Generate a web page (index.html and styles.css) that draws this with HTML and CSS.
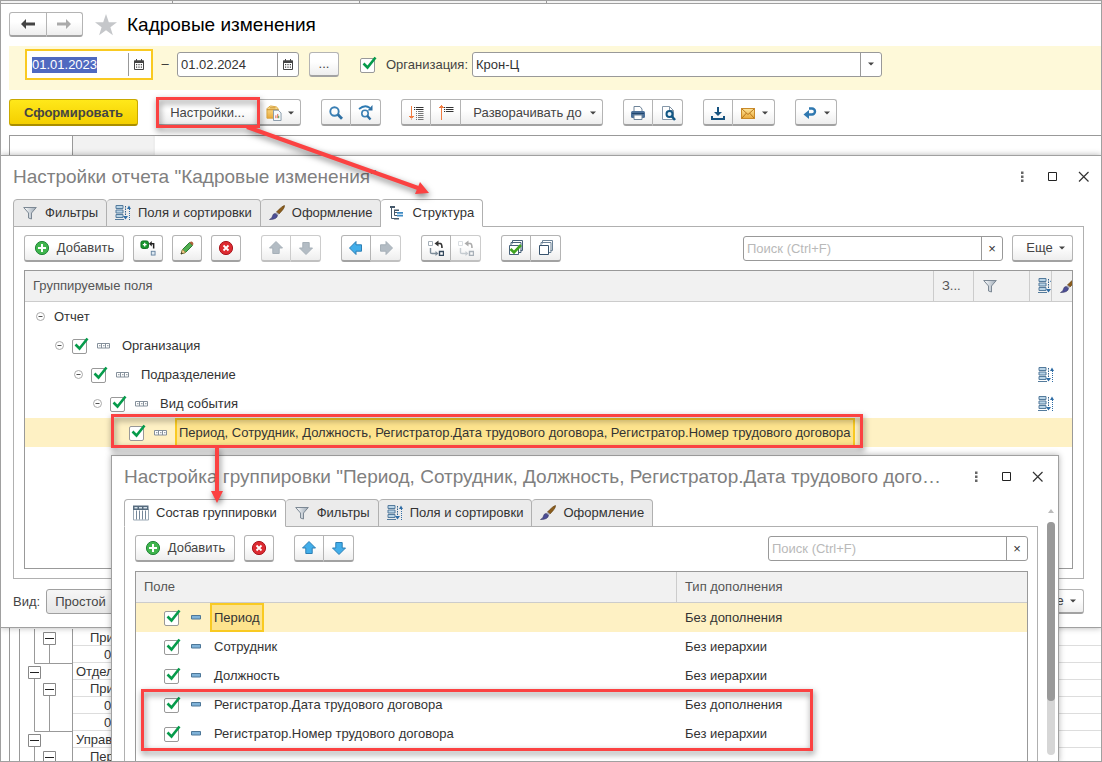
FILE: index.html
```html
<!DOCTYPE html>
<html lang="ru">
<head>
<meta charset="utf-8">
<title>Кадровые изменения</title>
<link rel="stylesheet" href="styles.css">
</head>
<body>
<svg class="sprite" aria-hidden="true">
  <defs>
    <linearGradient id="gFunnel" x1="0" x2="1"><stop offset="0" stop-color="#fff"/><stop offset="1" stop-color="#9aa7b4"/></linearGradient>
    <linearGradient id="gGold" x1="0" y1="0" x2="0" y2="1"><stop offset="0" stop-color="#fde49a"/><stop offset="1" stop-color="#e9a93a"/></linearGradient>
  </defs>
  <symbol id="left" viewBox="0 0 16 16"><path d="M1 8l5-5v3.600h9v2.800H6V13z" fill="currentColor"/></symbol>
  <symbol id="right" viewBox="0 0 16 16"><path d="M15 8l-5-5v3.600H1v2.800h9V13z" fill="currentColor"/></symbol>
  <symbol id="star" viewBox="0 0 24 24"><path d="M12 1l2.800 8.200H23l-6.600 5 2.500 8L12 17.300 5.100 22.200l2.500-8L1 9.200h8.200z" fill="#c5c7ca"/></symbol>
  <symbol id="cal" viewBox="0 0 10 11"><path d="M.5 2h9v8.500h-9z" fill="#fff" stroke="#444"/><path d="M0 1.500h10V4H0zM2 0h1v2H2zM7 0h1v2H7z" fill="#444"/><path d="M2 5h1.200v1.200H2zm2.400 0h1.200v1.200H4.400zm2.400 0H8v1.200H6.800zM2 7.500h1.200v1.200H2zm2.400 0h1.200v1.200H4.400zm2.400 0H8v1.200H6.800z" fill="#444"/></symbol>
  <symbol id="caret" viewBox="0 0 6 4"><path d="M0 .5h6L3 3.500z" fill="#444"/></symbol>
  <symbol id="folder" viewBox="0 0 17 17"><path d="M1 4l2-2 2-1 6 1 2 2v10H1z" fill="url(#gGold)" stroke="#d9a23c"/><path d="M1 5h12M4 3h6" stroke="#c98f2c" fill="none"/><path d="M8 5.500h5l3 3v8H8z" fill="#f7fafc" stroke="#8597a8"/><path d="M10.500 14v-3M12.500 14V9.500" stroke="#e05a3a"/><path d="M13.500 14v-2.500" stroke="#3aa04a"/></symbol>
  <symbol id="lens" viewBox="0 0 16 16"><circle cx="6.500" cy="6.500" r="4.200" fill="none" stroke="#3a7fb4" stroke-width="1.900"/><path d="M9.800 9.500l4.200 4.200" stroke="#2d6fa3" stroke-width="2.800"/></symbol>
  <symbol id="lensNext" viewBox="0 0 16 16"><path d="M1 4Q7-1 12 3" fill="none" stroke="#2d7ab3" stroke-width="1.800"/><path d="M14.500 0v5.500H9.500z" fill="#2d6fa3"/><circle cx="7" cy="8.500" r="3.200" fill="none" stroke="#3a7fb4" stroke-width="1.600"/><path d="M9.200 10.700l3.300 3.800" stroke="#2d6fa3" stroke-width="2.400"/></symbol>
  <symbol id="expand" viewBox="0 0 16 16"><path d="M3.500 1v12M1 11.500h5M2 12.500h3M3 14h1" stroke="#f07c42" fill="none"/><path d="M6 2.500h1.200M8 2.500h7.500M6 4.500h1.200M8 4.500h7.500" stroke="#333"/><path d="M8 6.500h1M10 6.500h5.500M8 8.500h1M10 8.500h5.500M8 10.500h1M10 10.500h5.500M8 12.500h1M10 12.500h5.500M8 14.500h1M10 14.500h5.500" stroke="#777"/></symbol>
  <symbol id="collapse" viewBox="0 0 16 16"><path d="M3.500 2v13M3 .5h1M2 1.500h3M1 2.500h5" stroke="#f07c42" fill="none"/><path d="M6 2.500h1.200M8 2.500h7.500M6 4.500h1.200M8 4.500h7.500M6 6.500h1.200M8 6.500h7.500" stroke="#333"/></symbol>
  <symbol id="printer" viewBox="0 0 16 16"><path d="M4 6V1.500h6L12 4v3" fill="#fff" stroke="#6f8499"/><rect x="1" y="6" width="14" height="7" rx="1.500" fill="#4b7099"/><path d="M2 8.500h12" stroke="#20466e"/><path d="M4 10h8v4.500H4z" fill="#fff" stroke="#6f8499"/></symbol>
  <symbol id="preview" viewBox="0 0 16 16"><path d="M2.500 1.500h7l4 4v9h-11z" fill="#fff" stroke="#8597a8"/><path d="M9.500 1.500v4h4" fill="none" stroke="#8597a8"/><circle cx="9.500" cy="9" r="3" fill="#e7f2fa" stroke="#125784" stroke-width="2"/><path d="M11.500 11l3.500 4" stroke="#125784" stroke-width="2.600"/></symbol>
  <symbol id="save" viewBox="0 0 16 16"><path d="M7 2h2v5h3l-4 4-4-4h3zM1 11h2v2h10v-2h2v4H1z" fill="#16527f"/></symbol>
  <symbol id="mail" viewBox="0 0 16 16"><rect x="1.500" y="3.500" width="13" height="10" fill="url(#gGold)" stroke="#c98a2a"/><path d="M2 4l6 5.500L14 4M2 13l4.500-5M14 13L9.500 8" fill="none" stroke="#b9771d"/></symbol>
  <symbol id="back" viewBox="0 0 16 16"><path d="M6 9.500H10a3 3 0 0 0 0-6H7" fill="none" stroke="#2f78b0" stroke-width="2.400"/><path d="M1.500 9.500L7 5v9z" fill="#2f78b0"/></symbol>
  <symbol id="funnel" viewBox="0 0 16 16"><path d="M1.700 2.500h12.600L9.500 8v6l-3-1V8z" fill="url(#gFunnel)" stroke="#7c8894"/></symbol>
  <symbol id="fields" viewBox="0 0 16 16"><path d="M1 .5h7v3H1zM1 5h7v3H1zM1 9.500h7v3H1z" fill="#b8d3e6" stroke="#547b9c"/><path d="M0 14.500h9" stroke="#547b9c"/><path d="M10.500 1v12" stroke="#2e5f8a" stroke-dasharray="1.500 1"/><path d="M8 11h5l-2.500 3.500zM12 4h4l-2-3.500z" fill="#2e6ca5"/><path d="M14.500 4v11" stroke="#2e6ca5" stroke-dasharray="1 1"/></symbol>
  <symbol id="brush" viewBox="0 0 16 16"><path d="M15.500.5Q16 3 10 9L7.500 7Q13 1 15.500.5z" fill="#8b5d1c" stroke="#5e3d0e" stroke-width=".6"/><path d="M7.500 7L10 9l-1.500 1.500-2.700-2z" fill="#aab"/><path d="M6 8.500l2.500 2Q8 14.500.5 14.500 3.500 13 3.500 11q.5-2.500 2.500-2.500z" fill="#4c4d96" stroke="#303260" stroke-width=".6"/></symbol>
  <symbol id="tree" viewBox="0 0 16 16"><path d="M1 1h5v2H1zM5 4.500h5v1.500H5zM5 13h5v1.500H5z" fill="#46586a"/><path d="M2.500 3v10.500H5M5.500 6v4.500H8M5.500 7.500h2.500" fill="none" stroke="#46586a"/><path d="M8 7h6v1.700H8zM8 9.800h6v1.700H8z" fill="#3e8ac4"/></symbol>
  <symbol id="cols" viewBox="0 0 16 15"><path d="M.5 4h15v10.500H.5z" fill="#fff" stroke="#9aa8b4"/><path d="M0 0h15.500v4.500H0z" fill="#566b7e"/><path d="M1.500 1.500h3v1.500h-3zM6 1.500h3v1.500H6zM10.500 1.500h3.500v1.500h-3.500z" fill="#d5e1ea"/><path d="M3.500 5v9M6.500 5v9M9.500 5v9M12.500 5v9" stroke="#75889a"/></symbol>
  <symbol id="plus" viewBox="0 0 16 16"><circle cx="8" cy="8" r="6.600" fill="#3fb54d" stroke="#24853a"/><path d="M8 4v8M4 8h8" stroke="#fff" stroke-width="2"/></symbol>
  <symbol id="cross" viewBox="0 0 16 16"><circle cx="8" cy="8" r="6.600" fill="#dd2b31" stroke="#a81820"/><path d="M5.500 5.500l5 5M10.500 5.500l-5 5" stroke="#fff" stroke-width="1.800"/></symbol>
  <symbol id="addNode" viewBox="0 0 17 17"><rect x="1" y="1" width="8" height="8" rx="2" fill="#18962f" stroke="#0c6e1f"/><path d="M5 3v4M3 5h4" stroke="#fff" stroke-width="1.400"/><path d="M11 4h3.500v5" fill="none" stroke="#222" stroke-width="1.600"/><path d="M9.500 4l3-3v6z" fill="#222"/><rect x="12" y="12" width="4" height="4" fill="#dce8f2" stroke="#6784a0"/></symbol>
  <symbol id="pencil" viewBox="0 0 16 16"><path d="M2 14l1.500-4.500 7-7 3 3-7 7z" fill="#51ae50" stroke="#2c7a35"/><path d="M2 14l1.500-4.500 3 3z" fill="#f6cf8e" stroke="#a8793c" stroke-width=".7"/><path d="M10.500 2.500l1.500-1q2-.5 2.500 2.500l-1 1.500z" fill="#b0613c"/><path d="M2 14l.6-2 1.400 1.400z" fill="#222"/></symbol>
  <symbol id="up" viewBox="0 0 16 16"><path d="M8 1.500l6.500 6.500h-3.300v5.500H4.800V8H1.500z" fill="var(--af)" stroke="var(--as)"/></symbol>
  <symbol id="down" viewBox="0 0 16 16"><path d="M8 14.500L1.500 8h3.300V2.500h6.400V8h3.300z" fill="var(--af)" stroke="var(--as)"/></symbol>
  <symbol id="aleft" viewBox="0 0 16 16"><path d="M1.500 8L8 1.500v3.300h5.500v6.400H8v3.300z" fill="var(--af)" stroke="var(--as)"/></symbol>
  <symbol id="aright" viewBox="0 0 16 16"><path d="M14.500 8L8 1.500v3.300H2.500v6.400H8v3.300z" fill="var(--af)" stroke="var(--as)"/></symbol>
  <symbol id="swap" viewBox="0 0 16 16"><path d="M.5 1.500h4v4h-4z" fill="#fff" stroke="#a5afb8"/><path d="M11.500 11.500h4v4h-4z" fill="#fff" stroke="#34485c" stroke-width="1.400"/><path d="M9 3.500h3.500Q14 4 14 8" fill="none" stroke="#333" stroke-width="1.600"/><path d="M6.500 3.500l4-3v6z" fill="#333"/><path d="M2.500 8v4.500q0 1 1.500 1h4" fill="none" stroke="#7d8c99" stroke-width="1.400"/><path d="M10.500 13.500l-3-2.500v5z" fill="#7d8c99"/></symbol>
  <symbol id="checkAll" viewBox="0 0 16 16"><path d="M4.500 3.500v-3h10v10h-2M3 5.500V2.500h10v10h-2" fill="none" stroke="#47617a"/><path d="M1.500 5.500h9v9h-9z" fill="#fff" stroke="#47617a"/><path d="M2.500 9l3.500 3.500L13 5" fill="none" stroke="#3fa31f" stroke-width="2.600"/></symbol>
  <symbol id="clearAll" viewBox="0 0 16 16"><path d="M4.500 3.500v-3h10v10h-2M3 5.500V2.500h10v10h-2" fill="none" stroke="#6d8397"/><path d="M1.500 5.500h9v9h-9z" fill="#fff" stroke="#38536d"/></symbol>
  <symbol id="minus" viewBox="0 0 9 9"><circle cx="4.500" cy="4.500" r="4" fill="#fff" stroke="#aaa"/><path d="M2.500 4.500h4" stroke="#555"/></symbol>
  <symbol id="group" viewBox="0 0 13 6"><path d="M.5.5h12v4.500H.5zM4.500.5v4.500M8.500.5v4.500" fill="#fff" stroke="#85909b"/><path d="M2 2.700h1.500M6 2.700h1.500M10 2.700h1.500" stroke="#85909b"/></symbol>
  <symbol id="field" viewBox="0 0 13 6"><path d="M2.500 .5h9v3.500h-9z" fill="#7fb2d8" stroke="#4d7798"/></symbol>
  <symbol id="dots" viewBox="0 0 12 12"><path d="M5 .5h2.500v2.500H5zm0 4h2.500v2.500H5zm0 4h2.500v2.500H5z" fill="#666"/></symbol>
  <symbol id="max" viewBox="0 0 12 12"><path d="M1.500 1.500h8v8h-8z" fill="none" stroke="#222"/></symbol>
  <symbol id="close" viewBox="0 0 12 12"><path d="M1 1l9.500 9.500M10.500 1L1 10.500" stroke="#333" stroke-width="1.200"/></symbol>
</svg>

<div class="desktop">
  <div class="strip"><i></i><i></i><i></i></div>
  <header class="page-head">
    <div class="group nav">
      <button class="btn" aria-label="Назад"><svg class="ic"><use href="#left"/></svg></button>
      <button class="btn dim" aria-label="Вперед"><svg class="ic"><use href="#right"/></svg></button>
    </div>
    <svg class="star"><use href="#star"/></svg>
    <h1>Кадровые изменения</h1>
  </header>

  <section class="filter">
    <div class="focus">
      <div class="field date"><input id="from" type="text" value="01.01.2023" aria-label="Начало периода"><button aria-label="Календарь"><svg class="cal"><use href="#cal"/></svg></button></div>
    </div>
    <span class="dash">–</span>
    <div class="field date"><input type="text" value="01.02.2024" aria-label="Конец периода"><button aria-label="Календарь"><svg class="cal"><use href="#cal"/></svg></button></div>
    <button class="btn icon pick">...</button>
    <input class="check" type="checkbox" id="org-on" checked>
    <label class="org" for="org-on">Организация:</label>
    <div class="field combo"><input type="text" value="Крон-Ц" aria-label="Организация"><button aria-label="Выбрать"><svg class="caret"><use href="#caret"/></svg></button></div>
  </section>

  <div class="main-tools">
    <button class="btn primary">Сформировать</button>
    <div class="tools">
      <div class="group">
        <button class="btn settings">Настройки...</button>
        <button class="btn drop" aria-label="Варианты"><svg class="ic"><use href="#folder"/></svg><svg class="caret"><use href="#caret"/></svg></button>
      </div>
      <div class="group">
        <button class="btn icon" aria-label="Найти"><svg class="ic"><use href="#lens"/></svg></button>
        <button class="btn icon" aria-label="Найти далее"><svg class="ic"><use href="#lensNext"/></svg></button>
      </div>
      <div class="group">
        <button class="btn icon" aria-label="Развернуть"><svg class="ic"><use href="#expand"/></svg></button>
        <button class="btn icon" aria-label="Свернуть"><svg class="ic"><use href="#collapse"/></svg></button>
        <button class="btn level">Разворачивать до<svg class="caret"><use href="#caret"/></svg></button>
      </div>
      <div class="group">
        <button class="btn icon" aria-label="Печать"><svg class="ic"><use href="#printer"/></svg></button>
        <button class="btn icon" aria-label="Просмотр"><svg class="ic"><use href="#preview"/></svg></button>
      </div>
      <div class="group">
        <button class="btn icon" aria-label="Сохранить"><svg class="ic"><use href="#save"/></svg></button>
        <button class="btn drop" aria-label="Отправить"><svg class="ic"><use href="#mail"/></svg><svg class="caret"><use href="#caret"/></svg></button>
      </div>
      <button class="btn drop" aria-label="Вернуться"><svg class="ic"><use href="#back"/></svg><svg class="caret"><use href="#caret"/></svg></button>
    </div>
  </div>

  <div class="report">
    <div class="report-top"><span></span><span></span></div>
    <div class="report-bottom">
      <svg class="outline" viewBox="0 0 63 132"><g fill="none" stroke="#999"><path d="M9.500 0v132M24.500 0v34.500H63M39.500 16v18M24.500 50v52.500H63M39.500 67v35M24.500 118v14M62.500 0v132"/><g fill="#fff" stroke="#888"><path d="M33.500 3.500h12v12h-12zM18.500 37.500h12v12h-12zM33.500 54.500h12v12h-12zM18.500 105.500h12v12h-12zM33.500 122.500h12v12h-12z"/></g><path d="M35 9.500h9M20 43.500h9M35 60.500h9M20 111.500h9M35 128.500h9" stroke="#222"/></g></svg>
      <div class="lines">
        <div class="l1">При</div><div class="l2">0</div><div>Отдел</div><div class="l1">При</div><div class="l2">0</div><div class="l2">0</div><div>Управ</div><div class="l1">Пер</div>
      </div>
    </div>
  </div>

  <section class="window report-settings">
    <div class="title"><h2>Настройки отчета "Кадровые изменения"</h2>
      <button aria-label="Меню"><svg><use href="#dots"/></svg></button><button aria-label="Развернуть окно"><svg><use href="#max"/></svg></button><button aria-label="Закрыть"><svg><use href="#close"/></svg></button></div>
    <div class="tabs" role="tablist">
      <button class="tab" role="tab"><svg class="ic"><use href="#funnel"/></svg>Фильтры</button>
      <button class="tab" role="tab"><svg class="ic"><use href="#fields"/></svg>Поля и сортировки</button>
      <button class="tab" role="tab"><svg class="ic"><use href="#brush"/></svg>Оформление</button>
      <button class="tab active" role="tab"><svg class="ic"><use href="#tree"/></svg>Структура</button>
    </div>
    <div class="panel">
      <div class="bar">
        <div class="near">
          <button class="btn add"><svg class="ic"><use href="#plus"/></svg>Добавить</button>
          <button class="btn icon" aria-label="Новая группировка"><svg class="ic"><use href="#addNode"/></svg></button>
          <button class="btn icon" aria-label="Изменить"><svg class="ic"><use href="#pencil"/></svg></button>
          <button class="btn icon" aria-label="Удалить"><svg class="ic"><use href="#cross"/></svg></button>
        </div>
        <div class="group off">
          <button class="btn icon" aria-label="Вверх"><svg class="ic"><use href="#up"/></svg></button>
          <button class="btn icon" aria-label="Вниз"><svg class="ic"><use href="#down"/></svg></button>
        </div>
        <div class="group">
          <button class="btn icon" aria-label="Влево"><svg class="ic"><use href="#aleft"/></svg></button>
          <button class="btn icon off" aria-label="Вправо"><svg class="ic"><use href="#aright"/></svg></button>
        </div>
        <div class="group">
          <button class="btn icon" aria-label="Заменить"><svg class="ic"><use href="#swap"/></svg></button>
          <button class="btn icon off" aria-label="Заменить обратно"><svg class="ic faded"><use href="#swap"/></svg></button>
        </div>
        <div class="group">
          <button class="btn icon" aria-label="Включить все"><svg class="ic"><use href="#checkAll"/></svg></button>
          <button class="btn icon" aria-label="Выключить все"><svg class="ic"><use href="#clearAll"/></svg></button>
        </div>
        <div class="find">
          <div class="field search"><input type="text" placeholder="Поиск (Ctrl+F)" aria-label="Поиск"><button aria-label="Очистить">×</button></div>
          <button class="btn more">Еще<svg class="caret"><use href="#caret"/></svg></button>
        </div>
      </div>
      <div class="list">
        <table>
          <colgroup><col><col class="c40"><col class="c56"><col class="c22"><col class="c20"></colgroup>
          <thead><tr><th>Группируемые поля</th><th>З...</th><th><svg class="ic"><use href="#funnel"/></svg></th><th><svg class="ic"><use href="#fields"/></svg></th><th><svg class="ic"><use href="#brush"/></svg></th></tr></thead>
          <tbody>
            <tr><td><div class="node root"><svg class="tog"><use href="#minus"/></svg><span class="name">Отчет</span></div></td><td></td><td></td><td></td><td></td></tr>
            <tr><td><div class="node d1"><svg class="tog"><use href="#minus"/></svg><input class="check" type="checkbox" id="n1" checked><svg class="mark"><use href="#group"/></svg><label class="name" for="n1">Организация</label></div></td><td></td><td></td><td></td><td></td></tr>
            <tr><td><div class="node d2"><svg class="tog"><use href="#minus"/></svg><input class="check" type="checkbox" id="n2" checked><svg class="mark"><use href="#group"/></svg><label class="name" for="n2">Подразделение</label></div></td><td></td><td></td><td><svg class="ic"><use href="#fields"/></svg></td><td></td></tr>
            <tr><td><div class="node d3"><svg class="tog"><use href="#minus"/></svg><input class="check" type="checkbox" id="n3" checked><svg class="mark"><use href="#group"/></svg><label class="name" for="n3">Вид события</label></div></td><td></td><td></td><td><svg class="ic"><use href="#fields"/></svg></td><td></td></tr>
            <tr class="sel"><td><div class="node d4"><svg class="tog"></svg><input class="check" type="checkbox" id="n4" checked><svg class="mark"><use href="#group"/></svg><label class="name" for="n4">Период, Сотрудник, Должность, Регистратор.Дата трудового договора, Регистратор.Номер трудового договора</label></div></td><td></td><td></td><td></td><td></td></tr>
          </tbody>
        </table>
      </div>
    </div>
    <div class="foot"><label for="view">Вид:</label><select id="view"><option>Простой</option></select><button class="btn more">Еще<svg class="caret"><use href="#caret"/></svg></button></div>
  </section>

  <section class="window group-settings">
    <div class="title"><h2>Настройка группировки "Период, Сотрудник, Должность, Регистратор.Дата трудового догов…</h2>
      <button aria-label="Меню"><svg><use href="#dots"/></svg></button><button aria-label="Развернуть окно"><svg><use href="#max"/></svg></button><button aria-label="Закрыть"><svg><use href="#close"/></svg></button></div>
    <div class="tabs" role="tablist">
      <button class="tab active" role="tab"><svg class="ic"><use href="#cols"/></svg>Состав группировки</button>
      <button class="tab" role="tab"><svg class="ic"><use href="#funnel"/></svg>Фильтры</button>
      <button class="tab" role="tab"><svg class="ic"><use href="#fields"/></svg>Поля и сортировки</button>
      <button class="tab" role="tab"><svg class="ic"><use href="#brush"/></svg>Оформление</button>
    </div>
    <div class="panel">
      <div class="bar">
        <div class="near">
          <button class="btn add"><svg class="ic"><use href="#plus"/></svg>Добавить</button>
          <button class="btn icon" aria-label="Удалить"><svg class="ic"><use href="#cross"/></svg></button>
        </div>
        <div class="group">
          <button class="btn icon" aria-label="Вверх"><svg class="ic"><use href="#up"/></svg></button>
          <button class="btn icon" aria-label="Вниз"><svg class="ic"><use href="#down"/></svg></button>
        </div>
        <div class="find">
          <div class="field search"><input type="text" placeholder="Поиск (Ctrl+F)" aria-label="Поиск"><button aria-label="Очистить">×</button></div>
        </div>
      </div>
      <div class="list">
        <table>
          <colgroup><col><col class="c350"></colgroup>
          <thead><tr><th>Поле</th><th>Тип дополнения</th></tr></thead>
          <tbody>
            <tr class="sel"><td><div class="node flat"><input class="check" type="checkbox" id="f1" checked><svg class="mark"><use href="#field"/></svg><label class="name" for="f1">Период</label></div></td><td>Без дополнения</td></tr>
            <tr><td><div class="node flat"><input class="check" type="checkbox" id="f2" checked><svg class="mark"><use href="#field"/></svg><label class="name" for="f2">Сотрудник</label></div></td><td>Без иерархии</td></tr>
            <tr><td><div class="node flat"><input class="check" type="checkbox" id="f3" checked><svg class="mark"><use href="#field"/></svg><label class="name" for="f3">Должность</label></div></td><td>Без иерархии</td></tr>
            <tr><td><div class="node flat"><input class="check" type="checkbox" id="f4" checked><svg class="mark"><use href="#field"/></svg><label class="name" for="f4">Регистратор.Дата трудового договора</label></div></td><td>Без дополнения</td></tr>
            <tr><td><div class="node flat"><input class="check" type="checkbox" id="f5" checked><svg class="mark"><use href="#field"/></svg><label class="name" for="f5">Регистратор.Номер трудового договора</label></div></td><td>Без иерархии</td></tr>
          </tbody>
        </table>
      </div>
    </div>
    <div class="scroll"><svg class="up-tip" viewBox="0 0 6 4"><path d="M0 4h6L3 0z" fill="#bbb"/></svg><div class="track"><div class="thumb"></div></div></div>
  </section>

  <svg class="marks" width="1102" height="762" aria-hidden="true">
    <g fill="none" stroke="#fb4242" stroke-width="3">
      <path d="M157.500 98.500h101v28h-101zM112.500 415.500h749v31h-749zM142.500 690.500h669v59h-669z"/>
      <path d="M247 127L418 188M217 447v46" stroke-width="4"/>
    </g>
    <path d="M429 193l-14 1 5-12zM211 491h12l-6 12z" fill="#fb4242"/>
  </svg>
</div>
<script src="page.js"></script>
</body>
</html>
```
FILE: styles.css
```css
* { box-sizing: border-box; }
body { margin: 0; font: 13px/16px "Liberation Sans", Arial, sans-serif; color: #333; background: #fff; }
button, input, select { font: inherit; color: inherit; }
button { padding: 0; border: 0; background: none; }
h1, h2 { margin: 0; font-size: 19px; line-height: 24px; font-weight: normal; }
h1 { color: #000; }
svg { display: block; flex: none; }
.sprite { position: absolute; width: 0; height: 0; }
.ic { width: 16px; height: 16px; }
.caret { width: 6px; height: 4px; }

.desktop { position: relative; display: flex; flex-direction: column; height: 100vh; border: 1px solid #a0a0a0; overflow: hidden; --af: #42aeea; --as: #2c7fb5; }
.strip { display: flex; height: 3px; border-bottom: 1px solid #a0a0a0; background: #f3f3f3; padding-left: 171px; gap: 186px; }
.strip i { width: 1px; background: #999; }

.page-head { display: flex; align-items: center; padding: 8px 8px 9px; }
.nav { width: 74px; }
.nav .btn { flex: 1; height: 25px; color: #444; }
.nav .dim { color: #aaa; }
.star { width: 24px; height: 24px; margin: 0 9px 0 11px; }

.btn { display: flex; align-items: center; justify-content: center; height: 27px; border: 1px solid #b4b4b4; border-bottom: 2px solid #a2a2a2; border-radius: 3px; background: linear-gradient(#fff 40%, #eee); color: #444; white-space: nowrap; }
.group { display: flex; }
.group .btn + .btn { border-left: 0; border-top-left-radius: 0; border-bottom-left-radius: 0; }
.group .btn:not(:last-child) { border-top-right-radius: 0; border-bottom-right-radius: 0; }
.icon { width: 30px; }
.drop { width: 42px; gap: 6px; }
.off { --af: #b3bcc4; --as: #a6b0b8; }
.off .btn, .btn.off { border-color: #ccc; border-bottom-color: #c0c0c0; }
.faded { opacity: 0.4; }

.filter { display: flex; align-items: center; height: 44px; margin-left: 8px; padding: 0 16px 8px; background: #fef9d9; }
.focus { padding: 1px; border: 2px solid #f9ca22; background: #fff; }
.focus .field { border-color: #fff; }
.field { display: flex; height: 25px; border: 1px solid #999; border-radius: 3px; background: #fff; }
.field input { flex: 1; min-width: 0; padding: 1px 3px 0; border: 0; outline: 0; background: none; color: #333; }
.field input::selection { color: #fff; background: #4f69c0; }
.field input::placeholder { color: #b9b9b9; }
.field button { display: flex; align-items: center; justify-content: center; width: 21px; border-left: 1px solid #999; }
.date { width: 122px; }
.cal { width: 10px; height: 11px; }
.dash { width: 24px; text-align: center; }
.pick { margin: 0 21px 0 10px; height: 25px; }
.org { padding: 2px 4px 0 9px; color: #444; }
.combo { width: 410px; }
.check { appearance: none; flex: none; width: 17px; height: 17px; margin: 0; background: url("data:image/svg+xml,%3Csvg xmlns='http://www.w3.org/2000/svg' viewBox='0 0 17 17'%3E%3Crect x='.5' y='2.500' width='14' height='14' rx='1.500' fill='%23fff' stroke='%23999'/%3E%3Cpath d='M3.500 7.500l4 4L15.500 1.500' fill='none' stroke='%23069b4b' stroke-width='2.600'/%3E%3C/svg%3E"); }

.main-tools { display: flex; gap: 18px; padding: 9px 8px; }
.main-tools .btn { padding-top: 2px; }
.tools { display: flex; gap: 20px; }
.primary { width: 129px; border-color: #c9a900; border-bottom-color: #a98e00; background: linear-gradient(#ffe81a, #f4cf00); font-weight: bold; }
.settings { width: 103px; }
.level { width: 142px; gap: 8px; padding-left: 6px; }

.report { flex: 1; display: flex; flex-direction: column; justify-content: space-between; margin-left: 8px; border-top: 1px solid #999; border-left: 1px solid #999; }
.report-top { display: flex; height: 24px; }
.report-top span { width: 63px; border-right: 1px solid #999; }
.report-top span + span { width: 82px; background: #f2f2f2; border-right: 2px solid #eee; }
.report-bottom { display: flex; height: 132px; overflow: hidden; }
.outline { width: 63px; height: 132px; }
.lines { flex: 1; }
.lines div { height: 17px; padding: 1px 0 0 3px; border-bottom: 1px solid #ddd; }
.lines .l1 { padding-left: 17px; }
.lines .l2 { padding-left: 31px; }

.window { position: absolute; display: flex; flex-direction: column; background: #fff; border: 1px solid #a0a0a0; box-shadow: 0 0 6px rgba(0, 0, 0, 0.3); }
.report-settings { top: 154px; bottom: 133px; left: 0; right: 0; padding: 0 17px 13px 12px; border-left: 0; border-right: 0; }
.group-settings { top: 454px; bottom: -1px; left: 110px; right: 42px; padding: 0 20px 0 12px; border-bottom: 0; }
.title { display: flex; align-items: center; height: 43px; padding-bottom: 1px; gap: 19px; margin-right: -6px; }
.title h2 { flex: 1; overflow: hidden; text-overflow: ellipsis; white-space: nowrap; color: #808080; }
.title svg { width: 12px; height: 12px; }
.tabs { display: flex; margin-bottom: -1px; }
.tab { position: relative; display: flex; align-items: center; gap: 7px; height: 28px; padding: 0 8px; border: 1px solid #b0b0b0; border-radius: 4px 4px 0 0; background: #ebebeb; white-space: nowrap; }
.tab + .tab { border-left: 0; }
.active { background: #fff; border-bottom-color: #fff; }
.panel { flex: 1; display: flex; flex-direction: column; gap: 8px; min-height: 0; padding: 8px 10px 9px; border: 1px solid #b0b0b0; }
.group-settings .panel { gap: 9px; border-bottom: 0; padding: 8px 9px 0 10px; }
.bar { display: flex; gap: 20px; }
.near { display: flex; gap: 9px; }
.add { width: 100px; gap: 7px; }
.find { display: flex; align-items: center; gap: 9px; margin-left: auto; }
.search { width: 260px; }
.more { width: 61px; gap: 6px; padding-left: 6px; }
.list { flex: 1; min-height: 0; border: 1px solid #999; overflow: hidden; }
.group-settings .list { border-bottom: 0; }
table { width: 100%; table-layout: fixed; border-collapse: separate; border-spacing: 0; }
th { height: 31px; padding: 0 8px; border-right: 1px solid #ccc; border-bottom: 1px solid #ccc; background: #f1f1f1; color: #555; font-weight: normal; text-align: left; white-space: nowrap; overflow: hidden; }
th:last-child { border-right: 0; }
td { height: 29px; padding: 0 8px; white-space: nowrap; }
td:first-child { padding: 0; }
.c40 { width: 40px; } .c56 { width: 56px; } .c22 { width: 22px; } .c20 { width: 20px; } .c350 { width: 350px; }
.node { display: flex; align-items: center; gap: 8px; height: 29px; padding-left: 11px; }
.root { gap: 5px; }
.d1 { padding-left: 30px; } .d2 { padding-left: 49px; } .d3 { padding-left: 68px; } .d4 { padding-left: 87px; } .flat { padding-left: 28px; }
.tog { width: 9px; height: 9px; }
.mark { width: 13px; height: 6px; }
.name { display: flex; align-items: center; height: 29px; padding: 0 2px; border: 2px solid transparent; }
.sel { background: #fef1c4; }
.sel .name { border-color: #f9ca22; background: #fde38d; }
.foot { display: flex; align-items: center; gap: 6px; padding-top: 10px; color: #444; }
.foot select { appearance: none; width: 120px; height: 25px; padding: 0 8px; border: 1px solid #a0a0a0; border-radius: 3px; background: linear-gradient(#f6f6f6, #e6e6e6); }
.foot .btn { margin-left: auto; height: 25px; }

.scroll { position: absolute; top: 53px; bottom: 7px; right: 3px; width: 8px; display: flex; flex-direction: column; align-items: center; gap: 9px; }
.up-tip { width: 6px; height: 4px; }
.track { flex: 1; width: 8px; border-radius: 4px; background: #d6d6d6; }
.thumb { height: 77%; border-radius: 4px; background: #999; }

.marks { position: absolute; top: -1px; left: -1px; pointer-events: none; filter: drop-shadow(1px 3px 3px rgba(0, 0, 0, 0.5)); }
```
FILE: page.js
```
var from = document.getElementById("from");
from.focus();
from.select();
```
